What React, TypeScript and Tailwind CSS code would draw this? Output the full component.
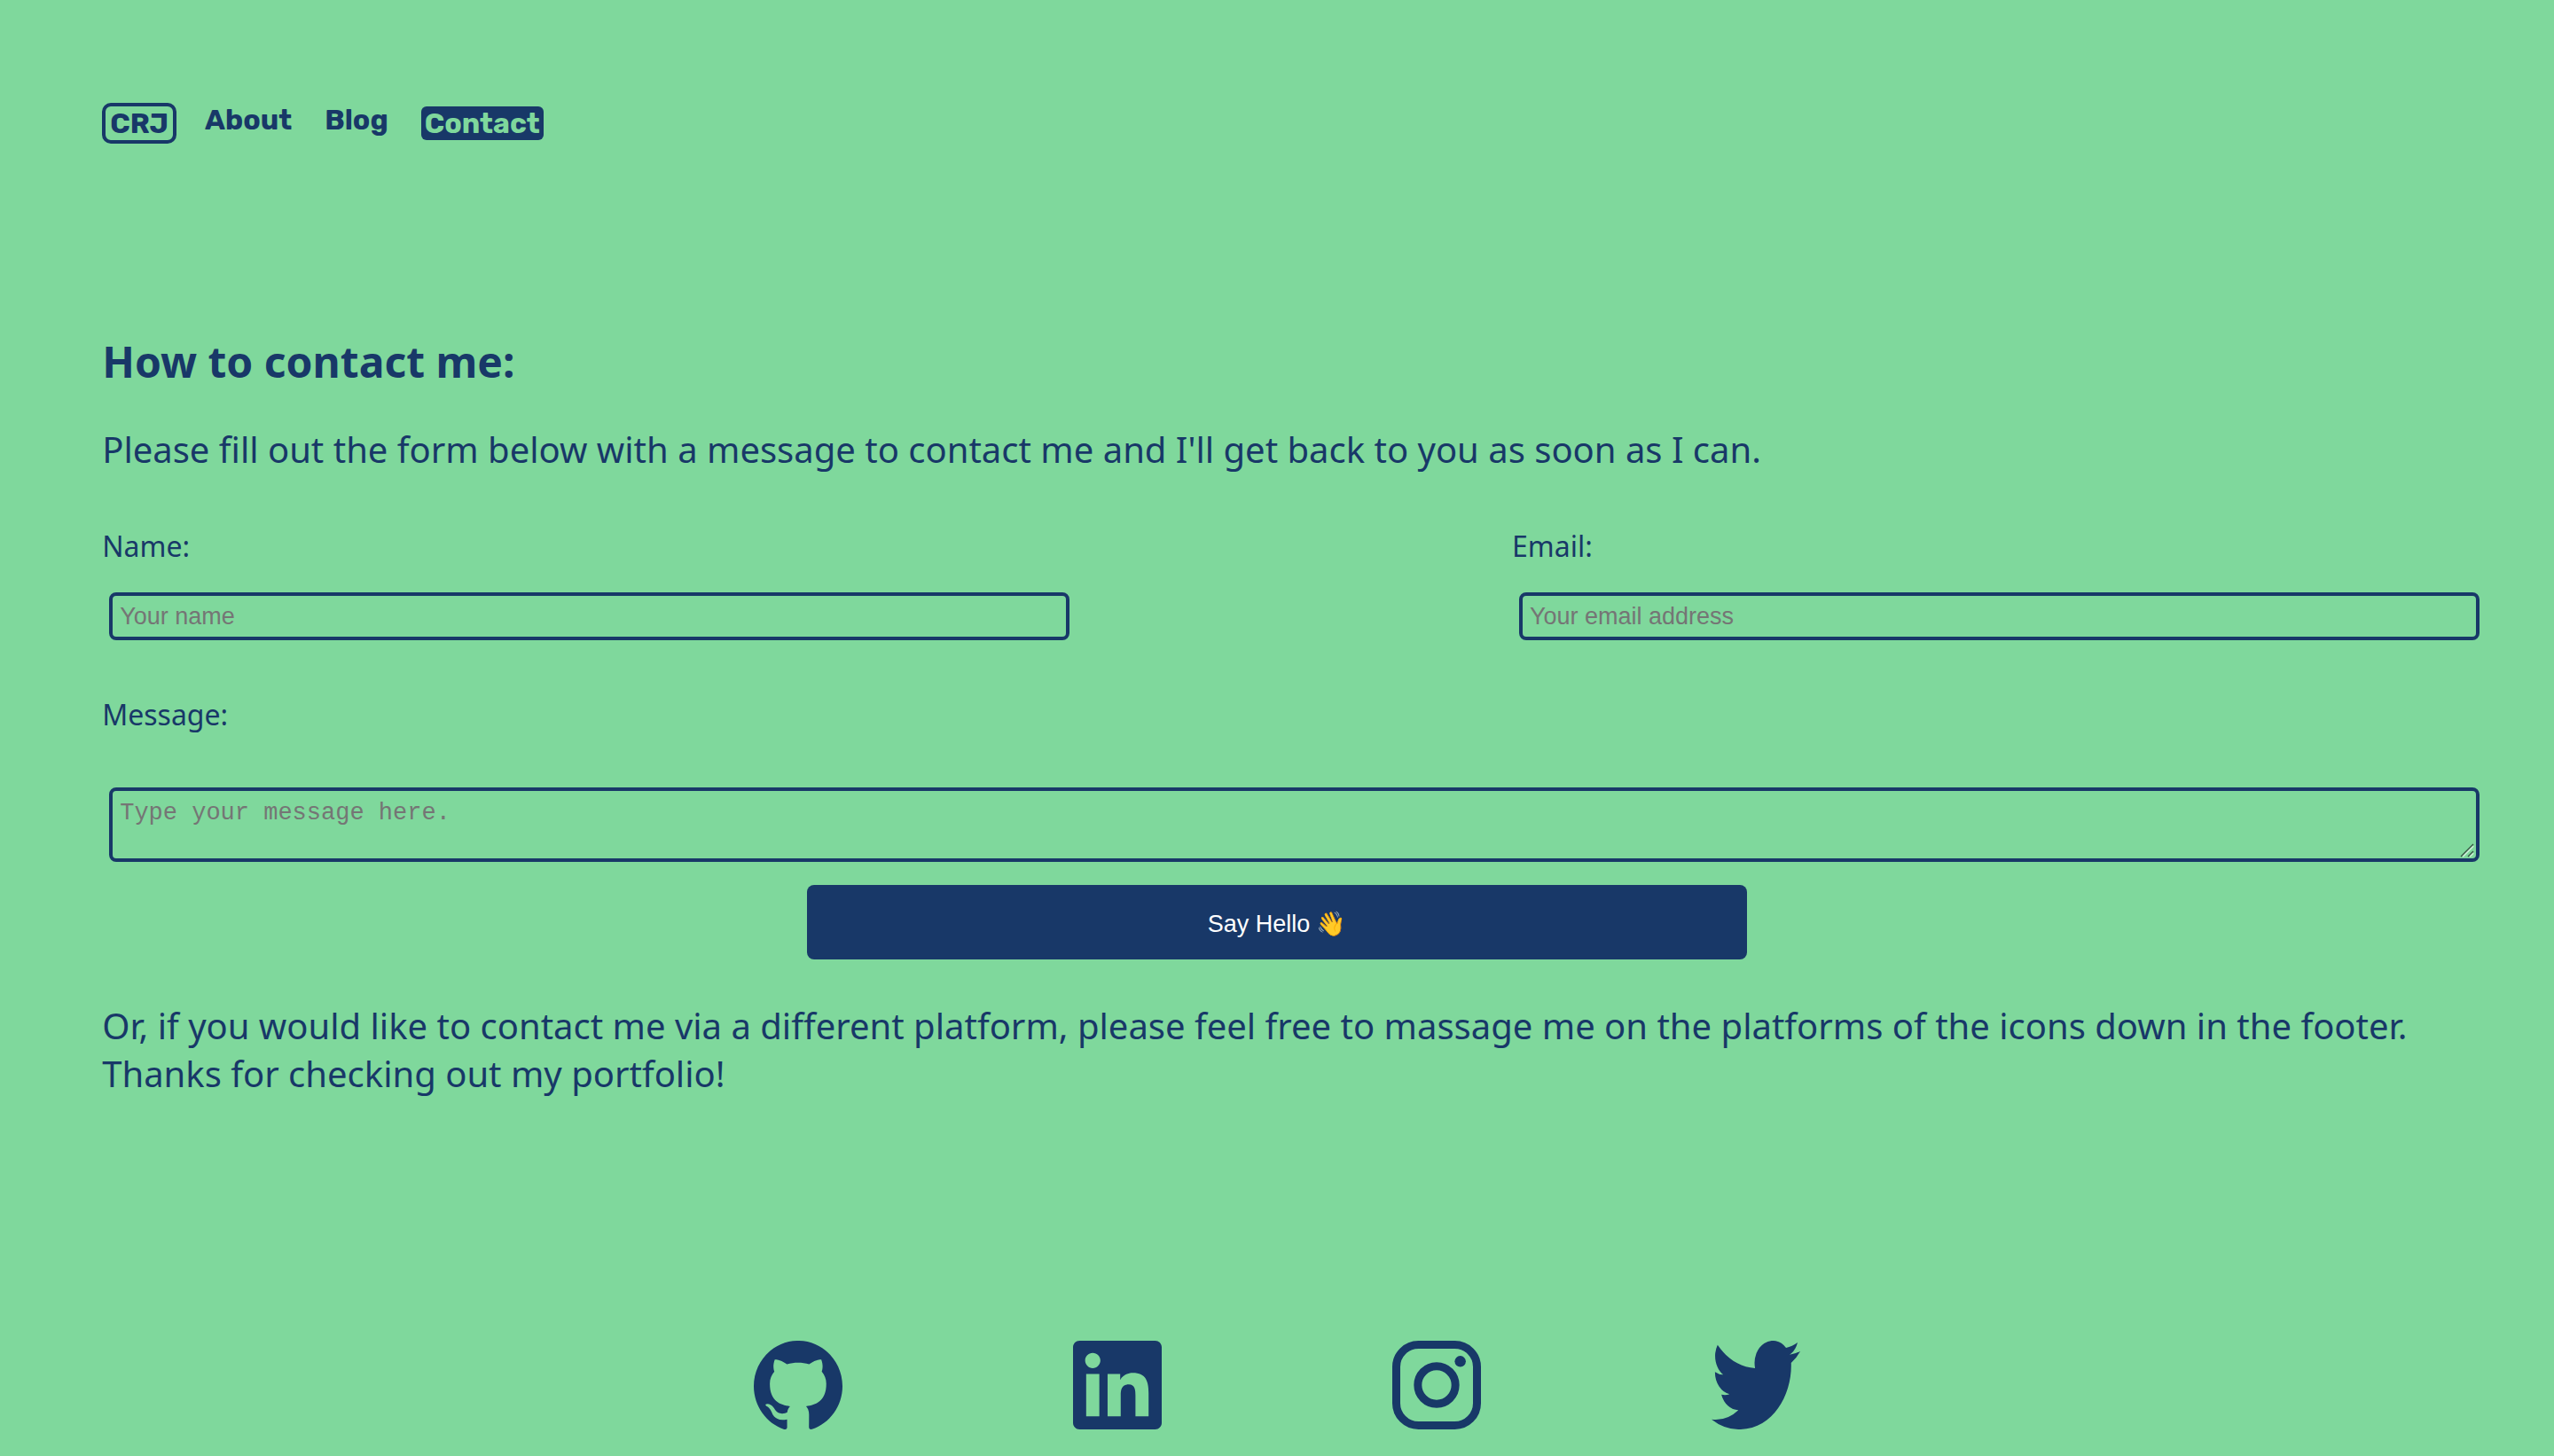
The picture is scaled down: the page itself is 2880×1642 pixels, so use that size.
import type { ReactNode } from "react";

const githubPath =
  "M12 .297c-6.63 0-12 5.373-12 12 0 5.303 3.438 9.8 8.205 11.385.6.113.82-.258.82-.577 0-.285-.01-1.04-.015-2.04-3.338.724-4.042-1.61-4.042-1.61C4.422 18.07 3.633 17.7 3.633 17.7c-1.087-.744.084-.729.084-.729 1.205.084 1.838 1.236 1.838 1.236 1.07 1.835 2.809 1.305 3.495.998.108-.776.417-1.305.76-1.605-2.665-.3-5.466-1.332-5.466-5.93 0-1.31.465-2.38 1.235-3.22-.135-.303-.54-1.523.105-3.176 0 0 1.005-.322 3.3 1.23.96-.267 1.98-.399 3-.405 1.02.006 2.04.138 3 .405 2.28-1.552 3.285-1.23 3.285-1.23.645 1.653.24 2.873.12 3.176.765.84 1.23 1.91 1.23 3.22 0 4.61-2.805 5.625-5.475 5.92.42.36.81 1.096.81 2.22 0 1.606-.015 2.896-.015 3.286 0 .315.21.69.825.57C20.565 22.092 24 17.592 24 12.297c0-6.627-5.373-12-12-12";
const linkedinPath =
  "M20.447 20.452h-3.554v-5.569c0-1.328-.027-3.037-1.852-3.037-1.853 0-2.136 1.445-2.136 2.939v5.667H9.351V9h3.414v1.561h.046c.477-.9 1.637-1.85 3.37-1.85 3.601 0 4.267 2.37 4.267 5.455v6.286zM5.337 7.433c-1.144 0-2.063-.926-2.063-2.065 0-1.138.92-2.063 2.063-2.063 1.14 0 2.064.925 2.064 2.063 0 1.139-.925 2.065-2.064 2.065zm1.782 13.019H3.555V9h3.564v11.452zM22.225 0H1.771C.792 0 0 .774 0 1.729v20.542C0 23.227.792 24 1.771 24h20.451C23.2 24 24 23.227 24 22.271V1.729C24 .774 23.2 0 22.222 0h.003z";
const twitterPath =
  "M23.953 4.57a10 10 0 01-2.825.775 4.958 4.958 0 002.163-2.723c-.951.555-2.005.959-3.127 1.184a4.92 4.92 0 00-8.384 4.482C7.69 8.095 4.067 6.13 1.64 3.162a4.822 4.822 0 00-.666 2.475c0 1.71.87 3.213 2.188 4.096a4.904 4.904 0 01-2.228-.616v.06a4.923 4.923 0 003.946 4.827 4.996 4.996 0 01-2.212.085 4.936 4.936 0 004.604 3.417 9.867 9.867 0 01-6.102 2.105c-.39 0-.779-.023-1.17-.067a13.995 13.995 0 007.557 2.209c9.053 0 13.998-7.496 13.998-13.985 0-.21 0-.42-.015-.63A9.935 9.935 0 0024 4.59z";

function SocialLink({ label, viewBox = "0 0 24 24", children }: { label: string; viewBox?: string; children: ReactNode }) {
  return (
    <a href="#" aria-label={label}>
      <svg viewBox={viewBox} preserveAspectRatio="none" fill="currentColor" className="size-[100px]">
        {children}
      </svg>
    </a>
  );
}

const field =
  "block w-full rounded-lg border-4 border-[#183868] bg-transparent px-2 text-[27px] placeholder:text-[#757575]";
const fieldBox = "-mr-8 ml-2 pr-px";
const labelText = "block text-[32px] leading-[44px]";

export default function App() {
  return (
    <div className="min-h-screen bg-[#7fd89c] px-[4%] pt-[116px] font-['Noto_Sans',sans-serif] text-[#183868]">
      <nav className="flex h-[46px] items-start font-['Rubik','Inter',sans-serif] text-[32px] leading-[38px] font-bold">
        <a href="#" className="rounded-[10px] border-4 border-[#183868] px-[5px]">
          CRJ
        </a>
        <a href="#" className="ml-8">
          About
        </a>
        <a href="#" className="ml-[37px]">
          Blog
        </a>
        <a href="#" className="mt-1 ml-[37px] rounded-md bg-[#183868] px-1 text-[#7fd89c]">
          Contact
        </a>
      </nav>

      <main className="mt-[213px]">
        <h1 className="text-[48px] leading-[66px] font-bold">How to contact me:</h1>
        <p className="mt-[39px] text-[40px] leading-[54px]">
          Please fill out the form below with a message to contact me and I'll get back to you as soon as I can.
        </p>

        <form className="mt-[60px] flex flex-col" onSubmit={(e) => e.preventDefault()}>
          <div className="flex justify-between">
            <div className="w-2/5">
              <label htmlFor="name" className={labelText}>
                Name:
              </label>
              <div className={`${fieldBox} mt-[30px]`}>
                <input id="name" type="text" placeholder="Your name" className={`${field} h-[54px] font-['Liberation_Sans',sans-serif]`} />
              </div>
            </div>
            <div className="w-2/5">
              <label htmlFor="email" className={labelText}>
                Email:
              </label>
              <div className={`${fieldBox} mt-[30px]`}>
                <input id="email" type="email" placeholder="Your email address" className={`${field} h-[54px] font-['Liberation_Sans',sans-serif]`} />
              </div>
            </div>
          </div>
          <label htmlFor="message" className={`${labelText} mt-[62px]`}>
            Message:
          </label>
          <div className={`${fieldBox} relative mt-[60px]`}>
            <textarea
              id="message"
              placeholder="Type your message here."
              className={`${field} h-[84px] resize-none pt-[10px] font-['Liberation_Mono',monospace] leading-[30px]`}
            />
            <svg viewBox="0 0 16 16" fill="none" aria-hidden="true" className="pointer-events-none absolute right-[7px] bottom-[5px] size-4">
              <path d="M3 15 15 3M11 15l4-4" stroke="#c9efd6" strokeWidth="2" />
              <path d="M1 15 15 1M9 15l6-6" stroke="#335240" strokeWidth="1.4" />
            </svg>
          </div>
          <button
            type="submit"
            className="mt-[26px] h-[84px] w-2/5 self-center rounded-lg bg-[#183868] pt-1 font-['Liberation_Sans','Noto_Color_Emoji',sans-serif] text-[27px] text-white"
          >
            Say Hello 👋
          </button>
        </form>

        <p className="mt-12 text-[40px] leading-[54px]">
          Or, if you would like to contact me via a different platform, please feel free to massage me on the platforms of the icons down in the footer. Thanks for checking out my portfolio!
        </p>
      </main>

      <footer className="mt-[274px] flex justify-center gap-[260px] pb-[30px]">
        <SocialLink label="GitHub" viewBox="0 0.3 24 23.4">
          <path d={githubPath} />
        </SocialLink>
        <SocialLink label="LinkedIn">
          <path d={linkedinPath} />
        </SocialLink>
        <SocialLink label="Instagram">
          <rect x="1.08" y="1.08" width="21.84" height="21.84" rx="6" fill="none" stroke="currentColor" strokeWidth="2.16" />
          <circle cx="12" cy="12" r="5.08" fill="none" stroke="currentColor" strokeWidth="2.16" />
          <circle cx="18.4" cy="5.6" r="1.5" />
        </SocialLink>
        <SocialLink label="Twitter" viewBox="0 2.25 24 19.5">
          <path d={twitterPath} />
        </SocialLink>
      </footer>
    </div>
  );
}
